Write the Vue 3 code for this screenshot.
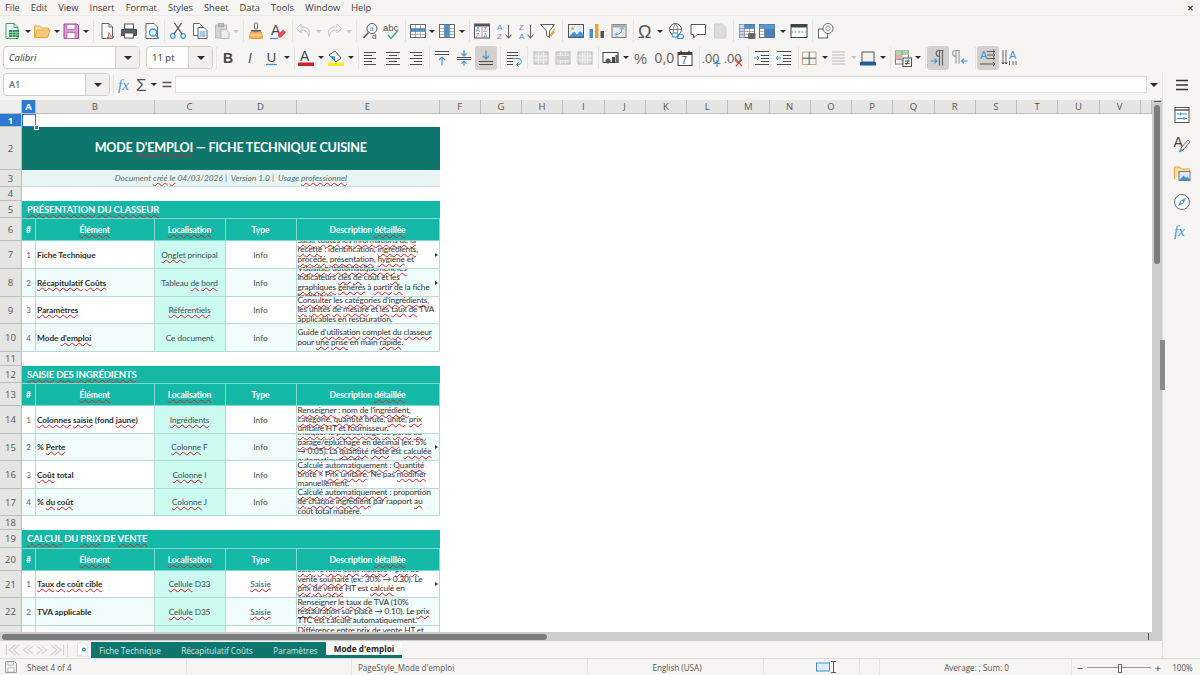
<script setup>
const dark = '#4d4d4d', blue = '#3f94d6', gray = '#b9b9b7', org = '#e9a23b'
const lines = (x1, x2, ys, c = dark, w = 1) => `<path d="${ys.map(y => `M${x1} ${y}H${x2}`).join('')}" stroke="${c}" stroke-width="${w}" fill="none"/>`
const table = (hi = '') => `<rect x="1.5" y="2.5" width="15" height="13" fill="#fff" stroke="#666"/>${hi}<path d="M1.5 6.5h15M1.5 9.5h15M1.5 12.5h15M6.5 2.5v13M11.5 2.5v13" stroke="#778" stroke-width=".6"/>`
const grayTable = (extra = '') => `<rect x="2" y="3" width="14" height="12" fill="#dcdcda" stroke="${gray}"/><path d="M2 7h14M2 11h14M6.5 3v12M11.5 3v12" stroke="#f2f2f0" stroke-width=".9"/>${extra}`
const txt = (x, y, s, size, fill = dark, extra = '') => `<text x="${x}" y="${y}" font-size="${size}" fill="${fill}" font-family="Liberation Sans, sans-serif" ${extra}>${s}</text>`

const icons = {
  new: `<path d="M3 1.5h8l4 4v11H3z" fill="#fff" stroke="#3aa35c"/><path d="M11 1.5v4h4" fill="none" stroke="#3aa35c"/><rect x="6" y="8" width="10" height="7" fill="#2e9356"/><path d="M6 10.5h10M6 12.7h10M9.5 8v7M13 8v7" stroke="#bfe5cc" stroke-width=".6"/>`,
  open: `<path d="M1.5 15V4h5l2 2h7v2" fill="#fbe0ae" stroke="#e5a23e"/><path d="M1.5 15.5l2.5-7.5h13l-2.5 7.5z" fill="#fcc97a" stroke="#e5a23e"/>`,
  save: `<path d="M2 2h13l1.5 1.5V16.5H2z" fill="#d99bd5" stroke="#a5479f"/><rect x="5" y="2.5" width="8" height="5" fill="#fff" stroke="#a5479f" stroke-width=".6"/><rect x="5" y="10.5" width="8" height="6" fill="#fff" stroke="#a5479f" stroke-width=".6"/>`,
  pdf: `<path d="M4 1.5h7l3.5 3.5v11.5H4z" fill="#fff" stroke="#666"/><path d="M11 1.5V5h3.5" fill="none" stroke="#666"/><path d="M8.5 16.5c3-2 2-6 2.5-6s.5 4 5 4.5c-3-.5-6 0-7.5 1.500z" fill="none" stroke="#d4574e"/>`,
  print: `<rect x="4.5" y="2" width="9" height="5" fill="#fff" stroke="#555"/><path d="M1.5 7.5h15v6h-15z" fill="#55606a" stroke="#4a4a4a"/><rect x="4.5" y="11" width="9" height="5" fill="#fff" stroke="#555"/>`,
  preview: `<path d="M3 1.5h8l3.5 3.5v11.5H3z" fill="#fff" stroke="#666"/><circle cx="10" cy="10.5" r="3.5" fill="#dff0fb" stroke="${blue}" stroke-width="1.3"/><path d="M12.5 13l3.5 3.5" stroke="${blue}" stroke-width="1.6"/>`,
  cut: `<circle cx="3.8" cy="14" r="2.3" fill="none" stroke="${blue}" stroke-width="1.2"/><circle cx="14.2" cy="14" r="2.3" fill="none" stroke="${blue}" stroke-width="1.2"/><path d="M5 12L12.5 1M13 12L5.5 1" stroke="#4a4a4a" stroke-width="1.2"/>`,
  copy: `<path d="M2.5 1.5h6l3 3v9h-9z" fill="#fff" stroke="#666"/><path d="M7 5.5h6l3 3v8H7z" fill="#fff" stroke="#666"/><path d="M8.5 10h6M8.5 12h6M8.5 14h6" stroke="${blue}"/>`,
  paste: `<rect x="2.5" y="3" width="11" height="13" fill="#d4d4d2" stroke="${gray}"/><rect x="5.5" y="1.5" width="5" height="3" fill="#bbb" stroke="#aaa"/><path d="M8 7.5h5l3 3v6H8z" fill="#eee" stroke="${gray}"/>`,
  clone: `<rect x="7.5" y="1" width="3" height="6" rx="1" fill="#fff" stroke="#666"/><path d="M4 8h10v2H4z" fill="#666"/><path d="M3.5 10h11l1 6.5h-13z" fill="#f3b562" stroke="${org}"/><path d="M3.5 13h11" stroke="#fbe3b8"/>`,
  clear: `${txt(2, 13, 'A', 14, '#444')}<path d="M9 12.5l5-5 3 3-5 5H9.5z" fill="#e8475f"/><path d="M1 16.5h8" stroke="${blue}" stroke-width="1.2"/>`,
  undo: `<path d="M6 2L1.5 6.5 6 11V8.5c4-.8 7 .8 7.5 6 3-6-1-10.5-7.5-9.500z" fill="#f1f1f0" stroke="#c4c4c2"/>`,
  redo: `<path d="M12 2l4.5 4.5L12 11V8.5c-4-.8-7 .8-7.5 6-3-6 1-10.5 7.5-9.500z" fill="#f1f1f0" stroke="#c4c4c2"/>`,
  find: `<circle cx="10" cy="6.5" r="5" fill="#fff" stroke="#555"/>${txt(7.6, 9, 'a', 7.5, blue)}<path d="M6.5 10.5L1.5 16" stroke="#555" stroke-width="1.6"/>${txt(10, 17, 'd', 8, dark)}`,
  spell: `${txt(0, 9, 'abc', 9.5, '#555')}<path d="M5 13l3 3.5 7-8" fill="none" stroke="#46ad72" stroke-width="1.4"/>`,
  rows: table(`<rect x="1.5" y="6.5" width="15" height="3" fill="${blue}"/>`),
  cols: table(`<rect x="6.5" y="2.5" width="5" height="13" fill="${blue}"/>`),
  sort: `<rect x="1.5" y="2" width="15" height="14" fill="#fff" stroke="#555"/><rect x="1.5" y="2" width="15" height="2.5" fill="#555"/><path d="M9 4.5V16" stroke="#777" stroke-width=".7"/>${txt(2.5, 10, 'A', 6.5, blue)}${txt(2.5, 15.5, 'Z', 6.5, '#b76ac8')}${txt(10, 10, 'Z', 6.5, '#b76ac8')}${txt(10, 15.5, 'A', 6.5, blue)}`,
  asc: `${txt(1, 8, 'A', 8, blue)}${txt(1, 16.5, 'Z', 8, '#b76ac8')}<path d="M12.5 3v12.5M9.5 12.5l3 3.5 3-3.500" fill="none" stroke="#666" stroke-width="1.1"/>`,
  desc: `${txt(1, 8, 'Z', 8, '#b76ac8')}${txt(1, 16.5, 'A', 8, blue)}<path d="M12.5 3v12.5M9.5 12.5l3 3.5 3-3.500" fill="none" stroke="#666" stroke-width="1.1"/>`,
  filter: `<path d="M1.5 2.5h14l-5 6.5v6.5l-3-2V9z" fill="#fff" stroke="#666"/><path d="M11 13l4-6.5 1.5 1-2 2.5 1.5 .5-4 4z" fill="${org}"/>`,
  image: `<rect x="1.5" y="2.5" width="15" height="13" fill="#e3f0fa" stroke="#555"/><circle cx="5.5" cy="6.5" r="1.5" fill="${org}"/><path d="M2 15l5-5.5 3 3 3-3.5 3.5 3.5V15z" fill="${blue}"/>`,
  chart: `<rect x="1.5" y="7" width="3.5" height="9" fill="${blue}"/><rect x="7" y="2" width="3.5" height="14" fill="${org}"/><rect x="12.5" y="9" width="3.5" height="7" fill="#555"/>`,
  pivot: `<rect x="2" y="2.5" width="14" height="13" fill="#ececea" stroke="#777"/><rect x="2" y="2.5" width="14" height="3" fill="#aaa"/><path d="M6 12.5c3 0 6-2 6-6M10 7.5l2-2 2 2M7 10.5l-2 2 2 2" fill="none" stroke="${blue}"/>`,
  omega: `${txt(1, 15.5, 'Ω', 18, '#555')}`,
  link: `<circle cx="8.5" cy="7.5" r="6" fill="#fff" stroke="#555"/><path d="M2.5 7.5h12M8.5 1.5c-3 4-3 8 0 12M8.5 1.5c3 4 3 8 0 12" fill="none" stroke="#555" stroke-width=".7"/><rect x="5" y="11" width="6.5" height="4" rx="2" fill="#f6f5f4" stroke="${blue}" stroke-width="1.1"/><rect x="10" y="12.5" width="6.5" height="4" rx="2" fill="none" stroke="${blue}" stroke-width="1.1"/>`,
  comment: `<path d="M2 2.5h14.5V12.5H8L4.5 16V12.5H2z" fill="#fff" stroke="#555"/>`,
  note: `<path d="M3.5 2h8l3.5 3.5V16H3.5z" fill="#dcdcda" stroke="#cfcfcd"/>`,
  headers: `${table(`<rect x="1.5" y="2.5" width="15" height="4" fill="${blue}"/><rect x="1.5" y="2.5" width="5" height="13" fill="#bcdcf2"/>`)}<rect x="10" y="11" width="7.5" height="6" rx="1" fill="#666"/>`,
  printarea: `${table(`<rect x="1.5" y="2.5" width="15" height="4" fill="#4aa3d8"/><rect x="6.5" y="6.5" width="10" height="9" fill="#3a86c8"/>`)}`,
  freeze: `<rect x="1" y="2.5" width="16" height="13" fill="#fff" stroke="#444"/><rect x="1" y="2.5" width="16" height="3" fill="#444"/><path d="M1 10h16" stroke="${blue}" stroke-dasharray="2 1.5"/>`,
  shapes: `<rect x="1.5" y="7" width="9" height="9" fill="#fff" stroke="#666"/><circle cx="11" cy="6.5" r="5" fill="#fff" stroke="#666"/><path d="M11 3.5l2.8 3-2.800 3-2.800-3z" fill="none" stroke="#888"/>`,
  b: txt(4, 14, 'B', 14, '#444', 'font-weight="700"'),
  i: txt(6, 14, 'I', 14, '#555', 'font-style="italic"'),
  u: `${txt(3.8, 12.5, 'U', 13, '#444')}<path d="M3 15.5h11" stroke="${blue}" stroke-width="1.3"/>`,
  fcolor: `${txt(3, 12, 'A', 14, '#444')}<rect x="1" y="13.5" width="16" height="3.5" fill="#c5242b"/>`,
  bcolor: `<path d="M2 6l6-4 6 7-5 4z" fill="#fff" stroke="#555"/><path d="M2 6.5l6 6 0-5z" fill="${blue}"/><rect x="1" y="13.5" width="16" height="3.5" fill="#f4ee1e"/>`,
  left: lines(2, 14, [3.5, 9.5, 15.5]) + lines(2, 10, [6.5, 12.5]),
  center: lines(2, 16, [3.5, 9.5, 15.5]) + lines(5, 13, [6.5, 12.5]),
  right: lines(4, 16, [3.5, 9.5, 15.5]) + lines(8, 16, [6.5, 12.5]),
  vtop: lines(2, 16, [2.5, 5.5]) + `<path d="M9 16.5V8M6 11l3-3 3 3" fill="none" stroke="${blue}" stroke-width="1.1"/>`,
  vmid: lines(2, 16, [8.5, 10.5]) + `<path d="M9 1v6M6.5 4.5L9 7l2.5-2.500M9 17v-5M6.5 14.5L9 12l2.5 2.500" fill="none" stroke="${blue}" stroke-width="1.1"/>`,
  vbot: lines(2, 16, [12.5, 15.5]) + `<path d="M9 1.5v8M6 7l3 3 3-3" fill="none" stroke="${blue}" stroke-width="1.1"/>`,
  wrap: lines(2, 13, [3.5, 6.5]) + lines(2, 8, [9.5, 12.5, 15.5]) + `<path d="M8 9.5h6c3 0 3 6 0 6h-2M13.5 13.5l-2 2 2 2" fill="none" stroke="${blue}"/>`,
  m1: grayTable(),
  m2: grayTable('<rect x="2.5" y="7" width="13" height="4" fill="#d0d0ce"/>'),
  m3: grayTable('<path d="M9 3v12" stroke="#f2f2f0" stroke-width=".9"/>'),
  curr: `<rect x="1" y="3.5" width="15" height="10" fill="#fff" stroke="#444"/><circle cx="6" cy="12" r="2.5" fill="#555"/><rect x="10" y="8" width="3" height="6" fill="#444"/><rect x="13.5" y="6" width="3" height="8" fill="#666"/>`,
  pct: txt(2, 14.5, '%', 14.5, '#666'),
  num: txt(0.5, 14, '0,0', 14, '#666'),
  date: `<rect x="2" y="3.5" width="14" height="13" fill="#fff" stroke="#444"/><rect x="2" y="3.5" width="14" height="2.5" fill="#444"/><path d="M5 1.5v3M13 1.5v3" stroke="#444" stroke-width="1.3"/>${txt(5.5, 15, '7', 10, '#444')}`,
  incd: `${txt(-1.5, 13.5, '.00', 13, '#666')}<path d="M10.5 14.5h7M14 11v7" stroke="${blue}" stroke-width="1.2"/>`,
  decd: `${txt(-1.5, 13.5, '.00', 13, '#666')}<path d="M11 10.5l6 6.5M17 10.5l-6 6.500" stroke="#d9483f" stroke-width="1.2"/>`,
  ind: lines(2, 16, [2.5, 15.5]) + lines(8, 16, [6.5, 9.5, 12.5]) + `<path d="M1 9h5M4 7l2 2-2 2" fill="none" stroke="${blue}"/>`,
  outd: lines(2, 16, [2.5, 15.5]) + lines(8, 16, [6.5, 9.5, 12.5]) + `<path d="M6 9H1M3 7L1 9l2 2" fill="none" stroke="${blue}"/>`,
  borders: `<path d="M2.5 3H16V15.5H2.5z" fill="none" stroke="#c9a27a"/><path d="M9.2 3V15.5M2.5 9.2H16" stroke="#555"/>`,
  bstyle: lines(2, 15, [3, 6, 9, 12, 15], gray, 1.2),
  bcolor2: `<rect x="3" y="3" width="12" height="10" fill="#f2f2f0" stroke="#555"/><rect x="1" y="13" width="16" height="3.5" fill="#1a5f9e"/>`,
  cond: `<rect x="1.5" y="2" width="13" height="13" fill="#fff" stroke="#777"/><rect x="1.5" y="2" width="13" height="4" fill="#a8d8aa"/><rect x="1.5" y="6" width="6" height="4.5" fill="#eda9a3"/><path d="M1.5 10.5h13M8 2v13" stroke="#777" stroke-width=".6"/><rect x="9" y="9" width="8.5" height="8.5" fill="#fff" stroke="#555"/><path d="M11 12h4.5M11 14.5h4.500M14.500 10.500l-2 5.500" stroke="#333" stroke-width=".8"/>`,
  ltr: `<path d="M13.5 1.5v15M10.5 1.5v15M14.5 1.5H9.5C6.5 1.5 6 7.5 10.5 7.5" fill="none" stroke="#666" stroke-width="1.2"/><path d="M1.5 12h6.5M5.5 9.5L8 12l-2.5 2.500" fill="none" stroke="${blue}" stroke-width="1.1"/>`,
  rtl: `<path d="M8 1.5v13M5 1.5v13M9 1.5H4C1 1.5.5 7.5 5 7.5" fill="none" stroke="#9a9a9a" stroke-width="1.2"/><path d="M16.5 12h-6M13 9.5L10.5 12l2.5 2.500" fill="none" stroke="${blue}" stroke-width="1.1"/>`,
  horiz: `${txt(1, 10, 'A', 11, blue)}<path d="M8 2.5h8M8 6h8M8 9.5h8M14 .8l2 1.700-2 1.700M14 4.300L16 6l-2 1.700M14 7.800l2 1.700-2 1.700" fill="none" stroke="#555" stroke-width=".9"/><path d="M1 15h15M14 13l2 2-2 2" fill="none" stroke="#555"/>`,
  vert: `${txt(8, 10, 'A', 11, blue)}<path d="M2 1v14M5 1v14M8.5 12v4M12 12v4M15 12v4M.8 13l1.200 2 1.200-2M3.800 13L5 15l1.200-2" fill="none" stroke="#555" stroke-width=".9"/>`,
  menuham: lines(2, 14, [4.5, 9, 13.5], '#333', 1.5),
  props: `<rect x="2" y="1.5" width="14" height="15" fill="#fff" stroke="#555"/><path d="M2 4h14" stroke="#555" stroke-width="1.5"/>${lines(4, 14, [8, 12.5], blue, 1)}<path d="M7.5 6.5v3M11 11v3" stroke="${blue}"/>`,
  styles: `${txt(0.5, 12, 'A', 14, '#444')}<path d="M7 16.5l1-3.5 7-8 2 2-7 8z" fill="#fff" stroke="#666"/><path d="M6 17.5l1.5-4 2.5 2z" fill="${blue}"/>`,
  gallery: `<path d="M1.5 15V3h5l2 2h8v3" fill="#fbe0ae" stroke="#e5a23e"/><rect x="6" y="7.5" width="11" height="9" fill="#dbeaf7" stroke="#777"/><path d="M6.5 16l4-4.500 2.500 2.500 1.500-1.500 2.500 3.500z" fill="${blue}"/>`,
  nav: `<circle cx="9" cy="9" r="7.5" fill="#fff" stroke="#666"/><path d="M13 5L10.5 10.5 5 13l2.5-5.500z" fill="${blue}"/><circle cx="9" cy="9" r="1.2" fill="#fff"/>`,
  fxd: `<text x="1" y="14" font-size="15" font-style="italic" fill="${blue}" font-family="Liberation Serif, serif">fx</text>`,
  fxf: `<text x="1" y="14" font-size="15" font-style="italic" fill="${blue}" font-family="Liberation Serif, serif">fx</text>`,
  sigma: txt(3, 15, 'Σ', 17, '#555'),
  equals: `<path d="M4.5 6.5h9M4.5 10.5h9" stroke="#555" stroke-width="1.6"/>`,
}

const item = (name, x, opts = {}) => ({ name, x, ...opts })
const arrow = (x, g) => ({ arrow: true, x, g })
const sep = x => ({ sep: true, x })

const rawT1 = [item('new', 12), arrow(27.5), item('open', 42), arrow(57), item('save', 71), arrow(86), sep(93),
  item('pdf', 107), item('print', 129), item('preview', 152), sep(164), item('cut', 178), item('copy', 200),
  item('paste', 222), arrow(236, 1), sep(243), item('clone', 256), item('clear', 278), sep(292), item('undo', 304),
  arrow(319, 1), item('redo', 334), arrow(349, 1), sep(356), item('find', 371), item('spell', 392), sep(405),
  item('rows', 418), arrow(432), item('cols', 447), arrow(462), sep(469), item('sort', 482), item('asc', 505),
  item('desc', 527), item('filter', 548), sep(562), item('image', 576), item('chart', 597), item('pivot', 619),
  sep(633), item('omega', 646), arrow(660), item('link', 676), item('comment', 698), item('note', 720), sep(733),
  item('headers', 747), item('printarea', 767), arrow(783), item('freeze', 799), sep(812), item('shapes', 826)]
const rawT2 = [sep(216), item('b', 228), item('i', 251), item('u', 272), arrow(287), sep(294), item('fcolor', 306),
  arrow(321), item('bcolor', 336), arrow(351), sep(358), item('left', 371), item('center', 393), item('right', 415),
  sep(429), item('vtop', 442), item('vmid', 464), item('vbot', 486, { on: 1 }), sep(500), item('wrap', 514), sep(527),
  item('m1', 541), item('m2', 563), item('m3', 585), sep(598), item('curr', 611), arrow(626), item('pct', 641),
  item('num', 663), item('date', 685), sep(699), item('incd', 712), item('decd', 734), sep(748), item('ind', 762),
  item('outd', 784), sep(798), item('borders', 809), arrow(825), item('bstyle', 839), arrow(854, 1),
  item('bcolor2', 868), arrow(883), sep(890), item('cond', 903), arrow(918), sep(925), item('ltr', 938, { on: 1 }),
  item('rtl', 960), sep(975), item('horiz', 988, { on: 1 }), item('vert', 1010)]

const widthOf = i => i.sep ? 1 : i.arrow ? 6 : i.on ? 22 : 18
const place = (arr, start) => {
  let end = start
  return arr.map(i => {
    const w = widthOf(i)
    const left = i.x - w / 2
    const out = { ...i, w, gap: left - end }
    end = left + w
    return out
  })
}
const t1 = place(rawT1, 0)
const t2 = place(rawT2, 213)

const menus = ['File', 'Edit', 'View', 'Insert', 'Format', 'Styles', 'Sheet', 'Data', 'Tools', 'Window', 'Help']
const colHeads = ['A', 'B', 'C', 'D', 'E', 'F', 'G', 'H', 'I', 'J', 'K', 'L', 'M', 'N', 'O', 'P', 'Q', 'R', 'S', 'T', 'U', 'V', '']
const deck = ['props', 'styles', 'gallery', 'nav', 'fxd']
const tabs = ['Fiche Technique', 'Récapitulatif Coûts', 'Paramètres']

// Words in [brackets] carry the red spell-check wave.
const parse = s => s.split(/(\[[^\]]*\])/).filter(Boolean).map(p =>
  p[0] === '[' ? { t: p.slice(1, -1), err: true } : { t: p, err: false })

const headRow = ['#', '[Élément]', '[Localisation]', 'Type', 'Description [détaillée]']
const head = { kind: 'head', h: 23, cells: headRow.map(parse) }
const blank = h => ({ kind: 'blank', h })
const section = (h, s) => ({ kind: 'section', h, seg: parse(s) })
const row = (h, n, b, c, d, e, more) => ({
  kind: 'row', h, n, alt: n % 2 === 0, more, b: parse(b), c: parse(c), d: parse(d), e: e.map(parse),
})

const rows = [
  { kind: 'first', h: 13 },
  { kind: 'title', h: 43, seg: parse("MODE [D'EMPLOI] — FICHE TECHNIQUE CUISINE") },
  { kind: 'sub', h: 17, seg: parse('Document [créé] [le] 04/03/2026 |  Version 1.0 |  Usage [professionnel]') },
  blank(14),
  section(17, '[PRÉSENTATION] [DU] [CLASSEUR]'),
  head,
  row(28, 1, 'Fiche Technique', '[Onglet] principal', 'Info', ['[Saisir] [toutes] [les] [informations] [de] [la]', '[recette] : identification, [ingrédients],', '[procédé], [présentation], [hygiène] et', '[valeurs] [nutritionnelles].'], true),
  row(28, 2, '[Récapitulatif] [Coûts]', 'Tableau [de] [bord]', 'Info', ['[Visualiser] [automatiquement] [les]', 'indicateurs [clés] [de] coût et [les]', '[graphiques] [générés] à [partir] [de] la fiche', 'technique.'], true),
  row(27, 3, '[Paramètres]', '[Référentiels]', 'Info', ['[Consulter] [les] [catégories] [d\'ingrédients],', '[les] [unités] [de] [mesure] et [les] [taux] [de] TVA', '[applicables] en [restauration].']),
  row(28, 4, "Mode [d'emploi]", 'Ce document', 'Info', ["Guide [d'utilisation] [complet] [du] [classeur]", 'pour [une] [prise] en main [rapide].']),
  blank(14),
  section(17, '[SAISIE] [DES] [INGRÉDIENTS]'),
  head,
  row(28, 1, '[Colonnes] [saisie] (fond [jaune])', '[Ingrédients]', 'Info', ["[Renseigner] : [nom] [de] [l'ingrédient],", '[catégorie], [quantité] brute, [unité], [prix]', '[unitaire] HT [et] [fournisseur].']),
  row(27, 2, '% [Perte]', '[Colonne] F', 'Info', ['[Indiquer] [le] [pourcentage] [de] [perte] [au]', '[parage/épluchage] en [décimal] (ex: 5%', '→ 0.05). La [quantité] [nette] est [calculée]', '[automatiquement].'], true),
  row(28, 3, '[Coût] total', '[Colonne] I', 'Info', ['[Calculé] [automatiquement] : [Quantité]', 'brute × [Prix] [unitaire]. Ne pas [modifier]', '[manuellement].']),
  row(27, 4, '% [du] [coût]', '[Colonne] J', 'Info', ['[Calculé] [automatiquement] : proportion', '[de] [chaque] [ingrédient] par rapport [au]', '[coût] total [matière].']),
  blank(14),
  section(18, '[CALCUL] DU [PRIX] DE [VENTE]'),
  head,
  row(27, 1, '[Taux] [de] [coût] [cible]', '[Cellule] D33', '[Saisie]', ['[Saisir] [le] [ratio] [coût] [matière] / [prix] [de]', '[vente] [souhaité] (ex: 30% → 0.30). Le', '[prix] [de] [vente] HT est [calculé] en', '[conséquence].'], true),
  row(28, 2, 'TVA applicable', '[Cellule] D35', '[Saisie]', ['[Renseigner] [le] [taux] [de] TVA (10%', '[restauration] [sur] place → 0.10). Le [prix]', '[TTC] est [calculé] [automatiquement].']),
  row(28, 3, '[Prix] [de] [vente]', '[Cellule] D37', 'Calcul', ['[Différence] [entre] [prix] [de] [vente] HT et', 'coût [matière] : marge brute réalisée', 'sur [chaque] portion.']),
]
const gridRows = rows.map(r => r.h + 'px').join(' ')
</script>

<template>
  <div class="app">
    <header class="menubar">
      <span v-for="m in menus" :key="m" class="menu">{{ m }}</span>
      <span class="close">✕</span>
    </header>

    <div class="toolbar t1">
      <template v-for="(i, k) in t1" :key="k">
        <span v-if="i.sep" class="sep" :style="{ marginLeft: i.gap + 'px' }"></span>
        <span v-else-if="i.arrow" class="arr" :class="{ off: i.g }" :style="{ marginLeft: i.gap + 'px' }"></span>
        <svg v-else class="ico" viewBox="0 0 18 18" :style="{ marginLeft: i.gap + 'px' }" v-html="icons[i.name]"></svg>
      </template>
    </div>

    <div class="toolbar t2">
      <div class="combo fontname"><span class="val it">Calibri</span><span class="seg"><i class="arr big"></i></span></div>
      <div class="combo fontsize"><span class="val">11 pt</span><span class="seg"><i class="arr big"></i></span></div>
      <template v-for="(i, k) in t2" :key="k">
        <span v-if="i.sep" class="sep" :style="{ marginLeft: i.gap + 'px' }"></span>
        <span v-else-if="i.arrow" class="arr" :class="{ off: i.g }" :style="{ marginLeft: i.gap + 'px' }"></span>
        <span v-else-if="i.on" class="onbtn" :style="{ marginLeft: i.gap + 'px' }">
          <svg class="ico" viewBox="0 0 18 18" v-html="icons[i.name]"></svg>
        </span>
        <svg v-else class="ico" viewBox="0 0 18 18" :style="{ marginLeft: i.gap + 'px' }" v-html="icons[i.name]"></svg>
      </template>
    </div>

    <div class="middle">
      <main class="main">
        <div class="formula">
          <div class="combo namebox"><span class="val">A1</span><span class="seg"><i class="arr big"></i></span></div>
          <span class="sep fsep"></span>
          <svg class="ico fx" viewBox="0 0 18 18" v-html="icons.fxf"></svg>
          <svg class="ico sg" viewBox="0 0 18 18" v-html="icons.sigma"></svg>
          <span class="arr fa"></span>
          <svg class="ico eq" viewBox="0 0 18 18" v-html="icons.equals"></svg>
          <div class="finput"></div>
          <span class="arr big fdrop"></span>
        </div>

        <div class="sheetwrap">
          <div class="sheet" :style="{ gridTemplateRows: '14px ' + gridRows }">
            <div class="corner"></div>
            <div v-for="c in colHeads" :key="c" class="ch" :class="{ sel: c === 'A' }">{{ c }}</div>

            <template v-for="(r, idx) in rows" :key="idx">
              <div class="rh" :class="{ sel: idx === 0 }">{{ idx + 1 }}</div>

              <template v-if="r.kind === 'first'">
                <div class="a1"><i class="handle"></i></div>
                <div class="rest2"></div>
              </template>

              <template v-else-if="r.kind === 'blank'">
                <div class="rest"></div>
              </template>

              <template v-else-if="r.kind === 'title'">
                <div class="span5 title"><span v-for="(s, j) in r.seg" :key="j" :class="{ err: s.err }">{{ s.t }}</span></div>
                <div class="rest6"></div>
              </template>

              <template v-else-if="r.kind === 'sub'">
                <div class="span5 subtitle"><span v-for="(s, j) in r.seg" :key="j" :class="{ err: s.err }">{{ s.t }}</span></div>
                <div class="rest6"></div>
              </template>

              <template v-else-if="r.kind === 'section'">
                <div class="span5 section"><span v-for="(s, j) in r.seg" :key="j" :class="{ err: s.err }">{{ s.t }}</span></div>
                <div class="rest6"></div>
              </template>

              <template v-else-if="r.kind === 'head'">
                <div v-for="(cell, j) in r.cells" :key="j" class="th"><span v-for="(s, q) in cell" :key="q" :class="{ err: s.err }">{{ s.t }}</span></div>
                <div class="rest6"></div>
              </template>

              <template v-else>
                <div class="td num" :class="{ alt: r.alt }">{{ r.n }}</div>
                <div class="td el" :class="{ alt: r.alt }"><span><span v-for="(s, j) in r.b" :key="j" :class="{ err: s.err }">{{ s.t }}</span></span></div>
                <div class="td loc"><span><span v-for="(s, j) in r.c" :key="j" :class="{ err: s.err }">{{ s.t }}</span></span></div>
                <div class="td ty" :class="{ alt: r.alt }"><span><span v-for="(s, j) in r.d" :key="j" :class="{ err: s.err }">{{ s.t }}</span></span></div>
                <div class="td desc" :class="{ alt: r.alt }">
                  <div class="dtext">
                    <div v-for="(ln, j) in r.e" :key="j" class="dl"><span v-for="(s, q) in ln" :key="q" :class="{ err: s.err }">{{ s.t }}</span></div>
                  </div>
                  <i v-if="r.more" class="more"></i>
                </div>
                <div class="rest6"></div>
              </template>
            </template>
          </div>
          <div class="vscroll"><i class="vend"></i><i class="vthumb"></i></div>
        </div>

        <div class="hscroll"><i class="hthumb"></i><i class="hend"></i></div>

        <div class="tabbar">
          <svg class="tabnav" viewBox="0 0 62 14">
            <path d="M1.5 1.5v11M11 1.5L4 7l7 5.500M15 1.5L8.500 7l6.500 5.500M24 3l-5 4 5 4M29 3l-5 4 5 4M33 3l5 4-5 4M38 3l5 4-5 4M47 1.500L53.500 7 47 12.500M51 1.500L58 7l-7 5.500M60.500 1.500v11" fill="none" stroke="#d2d2d0" stroke-width="1.2"/>
          </svg>
          <span class="tabsep"></span>
          <svg class="tabnew" viewBox="0 0 14 16"><path d="M1.5 1h8l3 3v11h-11z" fill="#fff" stroke="#ddd"/><circle cx="8.5" cy="8" r="2.2" fill="#3f7fb8"/><circle cx="8.5" cy="8" r=".8" fill="#fff"/></svg>
          <div class="tabs">
            <span v-for="t in tabs" :key="t" class="tab">{{ t }}</span>
            <span class="tab active">Mode d'emploi</span>
          </div>
        </div>
      </main>

      <aside class="sidebar">
        <svg class="ico ham" viewBox="0 0 16 18" v-html="icons.menuham"></svg>
        <svg v-for="d in deck" :key="d" class="ico dk" viewBox="0 0 18 18" v-html="icons[d]"></svg>
        <i class="grip"></i>
      </aside>
    </div>

    <footer class="status">
      <div class="st s1">
        <svg class="sv" viewBox="0 0 14 14"><path d="M1.5 1.5h9l2 2v9h-11z" fill="#eee" stroke="#9a9a9a"/><rect x="4" y="2" width="5.5" height="3" fill="#fff" stroke="#9a9a9a" stroke-width=".6"/><rect x="4" y="8" width="6" height="4" fill="#fff" stroke="#9a9a9a" stroke-width=".6"/></svg>
      </div>
      <div class="st s2">Sheet 4 of 4</div>
      <div class="st s3"></div>
      <div class="st s4">PageStyle_Mode d'emploi</div>
      <div class="st s5">English (USA)</div>
      <div class="st s6">
        <svg class="selico" viewBox="0 0 26 12"><rect x=".5" y="2" width="13" height="8" fill="#e0edf8" stroke="#3f94d6"/><path d="M15 .5h5M15 11.500h5M17.500 .5v11" stroke="#555" fill="none"/></svg>
      </div>
      <div class="st s7"></div>
      <div class="st s8"></div>
      <div class="st s9">Average: ; Sum: 0</div>
      <div class="st s10">
        <span class="zb">−</span><span class="slider"><i></i></span><span class="zb plus">+</span>
      </div>
      <div class="st s11">100%</div>
    </footer>
  </div>
</template>

<style scoped>
.app { width: 1200px; height: 675px; display: flex; flex-direction: column; background: #f6f5f4; overflow: hidden; font-family: "Open Sans", "Noto Sans", sans-serif; color: #3d3d3d; }

.menubar { height: 16px; display: flex; align-items: center; flex: none; padding-left: 5px; gap: 11px; font-size: 9.3px; border-bottom: 1px solid #ebeae8; box-sizing: border-box; }
.close { margin-left: auto; margin-right: 6px; font-size: 8px; font-weight: 700; color: #333; }

.toolbar { height: 28px; display: flex; align-items: center; flex: none; box-sizing: border-box; }
.t1 { padding-top: 2px; }
.t2 { padding-bottom: 1px; }
.ico { width: 18px; height: 18px; flex: none; display: block; overflow: visible; }
.sep { width: 1px; height: 22px; background: #e4e3e1; flex: none; }
.arr { width: 0; height: 0; flex: none; display: block; border-left: 3px solid transparent; border-right: 3px solid transparent; border-top: 3.5px solid #2b2b2b; }
.arr.off { border-top-color: #c4c4c2; }
.arr.big { border-left-width: 4px; border-right-width: 4px; border-top-width: 4.5px; }
.onbtn { width: 22px; height: 24px; background: #d2d0cd; border-radius: 3px; display: flex; align-items: center; justify-content: center; flex: none; }

.combo { display: flex; height: 23px; box-sizing: border-box; background: #fff; border: 1px solid #cfcecb; border-radius: 4px; font-size: 9.5px; flex: none; overflow: hidden; }
.val { flex: 1; padding-left: 5px; display: flex; align-items: center; color: #333; }
.it { font-style: italic; }
.seg { width: 23px; flex: none; background: #f0efed; border-left: 1px solid #cfcecb; display: flex; align-items: center; justify-content: center; }
.fontname { width: 137px; margin-left: 3px; }
.fontsize { width: 67px; margin-left: 6px; }

.middle { flex: 1; min-height: 0; display: flex; }
.main { width: 1162px; flex: none; display: flex; flex-direction: column; min-height: 0; }

.formula { height: 28px; display: flex; align-items: center; flex: none; box-sizing: border-box; padding-bottom: 3px; }
.namebox { width: 107px; margin-left: 3px; }
.fsep { margin-left: 3px; height: 20px; }
.fx { margin-left: 3px; }
.sg { margin-left: -2px; }
.fa { margin-left: 0; }
.eq { margin-left: 1px; }
.finput { width: 972px; height: 17px; margin-left: -1px; background: #fff; border: 1px solid #e0dfdd; box-sizing: border-box; flex: none; }
.fdrop { margin-left: 3px; }

.sheetwrap { flex: 1; min-height: 0; display: flex; overflow: hidden; }
.sheet { width: 1152px; flex: none; display: grid; align-content: start; grid-template-columns: 22px 14px 118.5px 71px 71px 143px repeat(17, 41.25px) 1fr; overflow: hidden; background: #fff; font-family: Lato, "Open Sans", sans-serif; height: 532px; }

.corner, .ch, .rh { background: #e5e5e3; border-right: 1px solid #bdbdbb; border-bottom: 1px solid #bdbdbb; box-sizing: border-box; font-family: "Open Sans", sans-serif; font-size: 9.5px; color: #555; display: flex; align-items: center; justify-content: center; overflow: hidden; }
.corner { background: #eeeeec; }
.ch.sel, .rh.sel { background: #2a7ad6; color: #fff; font-weight: 700; }

.a1 { position: relative; outline: 1px solid #2a7ad6; outline-offset: -1px; z-index: 2; }
.handle { position: absolute; right: -2.5px; bottom: -3px; width: 3px; height: 3px; background: #2a7ad6; border: 1px solid #fff; }
.rest { grid-column: 2 / -1; }
.rest2 { grid-column: 3 / -1; }
.rest6 { grid-column: 7 / -1; }
.span5 { grid-column: 2 / span 5; display: flex; align-items: center; white-space: pre; overflow: hidden; }

.title { background: #0f766e; color: #fff; justify-content: center; font-size: 12.6px; letter-spacing: -.23px; font-weight: 700; padding-bottom: 3px; box-sizing: border-box; }
.subtitle { background: #e8f5f3; color: #5e6b69; justify-content: center; font-size: 8.4px; font-style: italic; border-bottom: 1px solid #c9e6e1; box-sizing: border-box; }
.section { background: #14b8a6; color: #fff; font-size: 9.6px; letter-spacing: -.2px; font-weight: 700; padding: 0 0 1px 5px; box-sizing: border-box; }
.th { background: #14b8a6; color: #fff; font-size: 8.5px; letter-spacing: -.1px; font-weight: 700; display: flex; align-items: center; justify-content: center; white-space: pre; border-right: 1px solid #7fdccd; border-top: 1px solid #7fdccd; border-bottom: 1px solid #7fdccd; box-sizing: border-box; overflow: hidden; }

.td { background: #fff; border-right: 1px solid #b4dcd5; border-bottom: 1px solid #b4dcd5; box-sizing: border-box; display: flex; align-items: center; font-size: 8.3px; letter-spacing: -.1px; color: #3c3c3c; white-space: pre; overflow: hidden; min-width: 0; min-height: 0; }
.td.alt { background: #f0fdfa; }
.num { justify-content: center; font-size: 8px; color: #666; }
.el { font-weight: 700; color: #2d2d2d; padding-left: 1px; letter-spacing: -.05px; }
.loc { background: #ccfbf1; justify-content: center; color: #3f4f4d; }
.ty { justify-content: center; color: #4a4a4a; letter-spacing: 0; }
.desc { position: relative; padding-left: 1px; color: #333; letter-spacing: -.15px; }
.dtext { line-height: 9.3px; flex: none; }
.dl { height: 9.3px; }
.more { position: absolute; right: 1px; top: 50%; margin-top: -2px; border-left: 3px solid #333; border-top: 2px solid transparent; border-bottom: 2px solid transparent; }
.err { text-decoration: underline wavy #d2232a .6px; text-underline-offset: .5px; text-decoration-skip-ink: none; }

.vscroll { width: 10px; flex: none; background: #cdcdcd; display: flex; flex-direction: column; align-items: center; }
.vend { width: 7px; height: 1px; background: #555; margin-top: 1px; }
.vthumb { width: 6px; height: 159px; margin-top: 3px; background: #7c7c7c; border-radius: 3px; }

.hscroll { height: 9px; flex: none; background: #cdcdcd; display: flex; align-items: center; padding-left: 2px; padding-right: 13px; }
.hthumb { width: 545px; height: 6px; background: #7c7c7c; border-radius: 3px; }
.hend { width: 1px; height: 7px; background: #555; margin-left: auto; }

.tabbar { height: 17px; flex: none; display: flex; align-items: flex-end; background: #f6f5f4; }
.tabnav { width: 60px; height: 14px; margin-left: 5px; margin-bottom: 1px; flex: none; }
.tabsep { width: 1px; height: 14px; background: #d8d7d5; margin: 0 0 1px 2px; flex: none; }
.tabnew { width: 13px; height: 15px; margin-left: 8px; margin-bottom: 1px; flex: none; }
.tabs { display: flex; height: 16px; margin-left: 2px; background: #0f766e; font-size: 8.2px; flex: none; }
.tab { display: flex; align-items: center; justify-content: center; color: #cfe9e4; box-sizing: border-box; }
.tab:nth-child(1) { width: 78px; }
.tab:nth-child(2) { width: 96px; }
.tab:nth-child(3) { width: 61px; }
.tab.active { width: 76px; background: #fff; color: #222; font-weight: 700; border-bottom: 3px solid #0f766e; }

.sidebar { width: 38px; flex: none; border-left: 1px solid #e0dfdd; box-sizing: border-box; display: flex; flex-direction: column; align-items: center; position: relative; padding-top: 4px; }
.ham { width: 16px; height: 18px; margin-bottom: 12px; }
.dk { margin-bottom: 11px; }
.grip { position: absolute; left: -3px; top: 268px; width: 5px; height: 50px; background: #8a8a8a; }

.status { height: 17px; flex: none; display: flex; align-items: center; border-top: 1px solid #dcdbd9; box-sizing: border-box; font-size: 8.1px; color: #555; }
.st { height: 100%; box-sizing: border-box; display: flex; align-items: center; border-right: 1px solid #e4e3e1; flex: none; white-space: pre; }
.s1 { width: 22px; justify-content: center; border-right: 0; }
.sv { width: 14px; height: 14px; }
.s2 { width: 165px; padding-left: 5px; }
.s3 { width: 165px; }
.s4 { width: 236px; padding-left: 6px; }
.s5 { width: 176px; justify-content: center; padding-left: 3px; }
.s6 { width: 76px; padding-left: 53px; border-right: 0; }
.selico { width: 26px; height: 12px; flex: none; margin-left: -1px; }
.s7 { width: 20px; }
.s8 { width: 20px; }
.s9 { width: 192px; justify-content: center; padding-left: 2px; }
.s10 { width: 98px; padding-left: 4px; border-right: 0; gap: 3px; }
.zb { font-size: 11px; color: #333; width: 8px; text-align: center; }
.slider { width: 64px; height: 1px; background: #9a9a9a; position: relative; display: block; }
.slider i { position: absolute; left: 31px; top: -3px; width: 2px; height: 7px; background: #f6f5f4; border: 1px solid #666; box-sizing: content-box; }
.s11 { width: 30px; border-right: 0; justify-content: center; padding-right: 5px; }
</style>

<style>
html, body { margin: 0; padding: 0; background: #f6f5f4; }
</style>
